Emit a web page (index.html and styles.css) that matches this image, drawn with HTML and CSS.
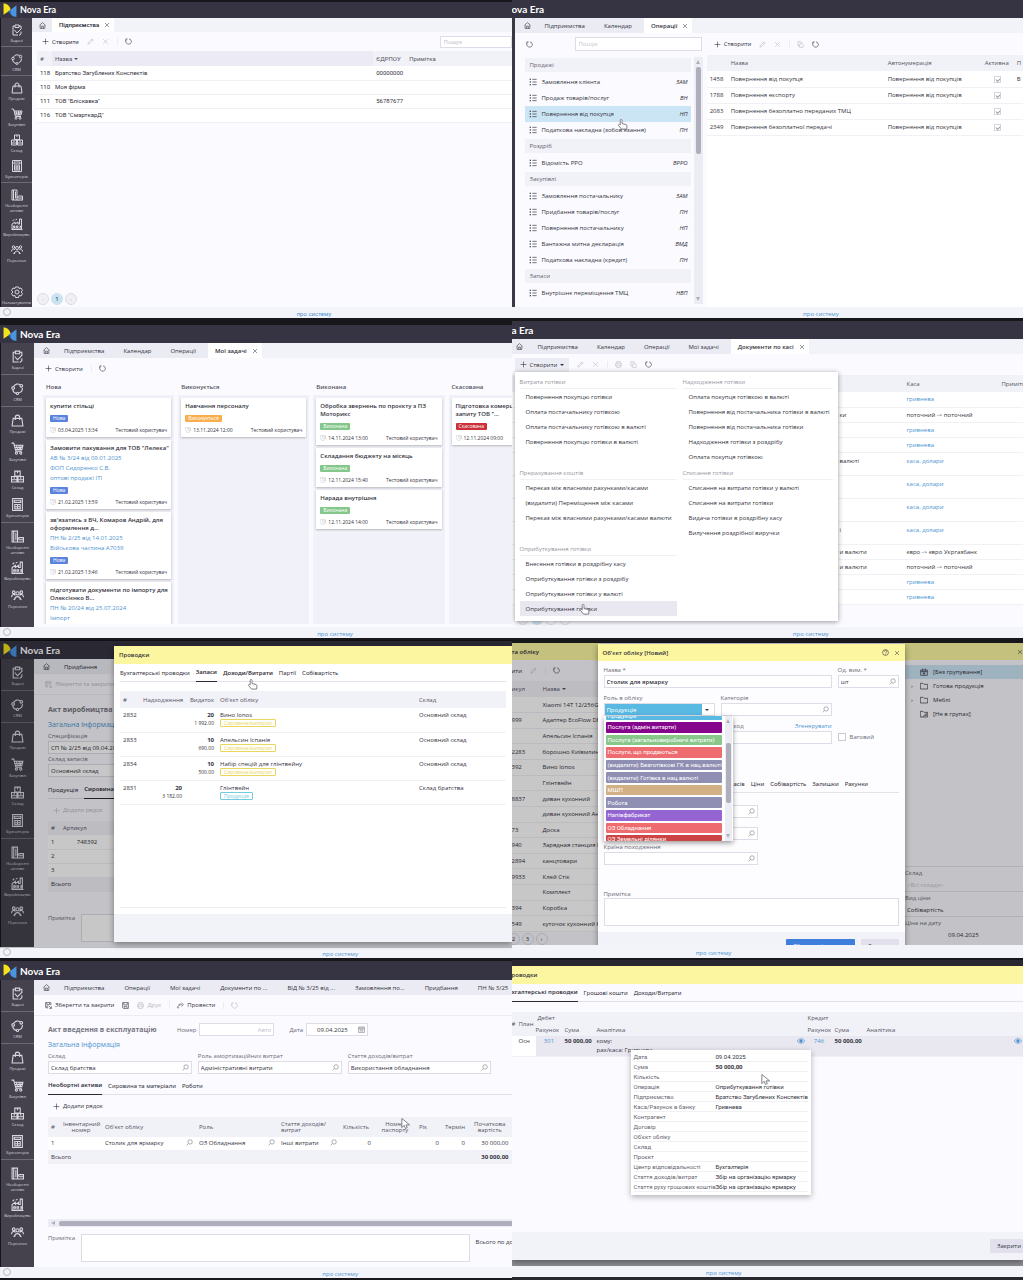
FILE: index.html
```html
<!DOCTYPE html>
<html lang="uk">
<head>
    <meta charset="UTF-8">
    <meta name="viewport" content="width=device-width, initial-scale=1.0">
    <title>Nova Era</title>
    <link rel="stylesheet" href="styles.css">
</head>
<body>
    <!-- icon set -->
    <svg class="sprite" aria-hidden="true">
        <symbol id="logo" viewBox="0 0 26 26">
            <path d="M1 1c7 0 12 5 13 12L1 22z" fill="#f3e21c"/>
            <path d="M25 4v22c-7 0-12-5-14-11z" fill="#4a94e0"/>
            <path d="M14 13l-3 2c1 3 2 5 4 7z" fill="#2d62b8"/>
        </symbol>
        <symbol id="task" viewBox="0 0 24 24"><path d="M8 4H4v18h10M16 4h4v5M8 2h8v5H8zM7 12l5 6 9-9M20 15v5l-4 3"/></symbol>
        <symbol id="crm" viewBox="0 0 24 24"><path d="M5 8a8.500 8.500 0 0 1 12-3M21 11a9 9 0 0 1-6 9M10 21a9 9 0 0 1-7-7"/><circle cx="19" cy="7" r="2.500"/><circle cx="4" cy="11" r="2.500"/><circle cx="12" cy="21" r="2"/></symbol>
        <symbol id="bag" viewBox="0 0 24 24"><path d="M4 8h16l2 14H2zM8 11V6a4 4 0 0 1 8 0v5"/></symbol>
        <symbol id="cart" viewBox="0 0 24 24"><path d="M1 2h4l4 15h11M6 6h16l-2 8H8M10 6l2 8M15 6v8M19 6l-2 8M7 10h14"/><circle cx="10" cy="20.500" r="2"/><circle cx="18" cy="20.500" r="2"/></symbol>
        <symbol id="boxes" viewBox="0 0 24 24"><path d="M7 2h10v9H7zM1 12h10v10H1zM13 12h10v10H13zM12 2v4M6 12v4M18 12v4M1 18h22"/></symbol>
        <symbol id="calc" viewBox="0 0 24 24"><path d="M3 1h18v22H3zM6 4h12v4H6zM7 11v9M12 11v9M17 11v9M6 12h12M6 16h12M6 20h12"/></symbol>
        <symbol id="assets" viewBox="0 0 24 24"><path d="M2 22V2h10v20zM5 2v20M9 5v14M12 22h11v-8h-8l-3 4M14 18h9M14 22v1M22 22v1"/></symbol>
        <symbol id="factory" viewBox="0 0 24 24"><path d="M2 22V12l6-4v4l6-4v4h3V2h4v20zM5 16h3v3H5zM11 16h3v3h-3zM17 16h2v3h-2M3 6l3-3M9 4l3-2M1 23h22"/></symbol>
        <symbol id="people" viewBox="0 0 24 24"><circle cx="5" cy="6" r="2.500"/><circle cx="19" cy="6" r="2.500"/><circle cx="12" cy="8" r="3"/><path d="M1 15c0-6 6-6 7-3M23 15c0-6-6-6-7-3M7 20c0-8 10-8 10 0M5 20l3-4M19 20l-3-4"/></symbol>
        <symbol id="gear" viewBox="0 0 24 24"><circle cx="12" cy="12" r="4"/><path d="M9 2h6l1 3 4-1 3 5-3 3 3 3-3 5-4-1-1 4H9l-1-4-4 1-3-5 3-3-3-3 3-5 4 1z"/></symbol>
        <symbol id="home" viewBox="0 0 24 24"><path d="M2 11L12 2l10 9M4 10v12h16V10M9 22v-8h6v8"/></symbol>
        <symbol id="refresh" viewBox="0 0 24 24"><path d="M9 3H3v6M3 6c-3 10 4 15 10 15 9 0 12-12 4-17M14 4h4"/></symbol>
        <symbol id="pencil" viewBox="0 0 24 24"><path d="M3 21l2-6L17 3l4 4L9 19zM15 5l4 4"/></symbol>
        <symbol id="close" viewBox="0 0 24 24"><path d="M4 4l16 16M20 4L4 20"/></symbol>
        <symbol id="plus" viewBox="0 0 24 24"><path d="M12 2v20M2 12h20"/></symbol>
        <symbol id="copy" viewBox="0 0 24 24"><path d="M3 2h10l3 4v3M3 2v15h5M9 9h8l4 4v9H9z"/></symbol>
        <symbol id="print" viewBox="0 0 24 24"><path d="M6 8V2h12v6M6 17H2V8h20v9h-4M6 14h12v8H6z"/></symbol>
        <symbol id="save" viewBox="0 0 24 24"><path d="M2 2h20v20H5l-3-3zM6 2v8h12V2M7 22v-7h10v7"/></symbol>
        <symbol id="save-close" viewBox="0 0 24 24"><path d="M11 20H4l-2-2V2h18v9M6 2v7h10V2M6 20v-6h5M13 13l9 9M22 15v7h-7"/></symbol>
        <symbol id="apply" viewBox="0 0 24 24"><path d="M2 20c1-8 6-11 14-11M15 3l7 6-7 6M2 20h5M6 10l5-5"/></symbol>
        <symbol id="find" viewBox="0 0 24 24"><circle cx="14" cy="10" r="7.500"/><path d="M8 16l-6 6"/></symbol>
        <symbol id="list" viewBox="0 0 24 24"><path d="M2 4h4M2 12h4M2 20h4M10 4h13M10 12h13M10 20h13M4 2v4M4 10v4M4 18v4"/></symbol>
        <symbol id="calendar" viewBox="0 0 24 24"><path d="M2 4h20v18H2zM2 9h20M7 1v5M17 1v5M6 13h12M6 17h12"/></symbol>
        <symbol id="clock" viewBox="0 0 24 24"><path d="M8 3h14v13M2 2h5M2 2v8M3 12a9 9 0 1 0 5-7M12 8v6h5"/></symbol>
        <symbol id="folder" viewBox="0 0 24 24"><path d="M1 21V4h8l3 3h11v14z"/></symbol>
        <symbol id="folder-off" viewBox="0 0 24 24"><path d="M1 21V4h8l3 3h11v14zM8 21L21 8M14 17h5v-5"/></symbol>
        <symbol id="package" viewBox="0 0 24 24"><path d="M2 6h20v16H2zM2 11h20M8 2v9M16 2v9M12 11v11M8 16h8"/></symbol>
        <symbol id="help" viewBox="0 0 24 24"><circle cx="12" cy="12" r="10"/><path d="M8 9c0-5 8-5 8 0 0 3-4 3-4 6M12 17v2"/></symbol>
        <symbol id="eye" viewBox="0 0 24 24"><path d="M1 12c5-9 17-9 22 0-5 9-17 9-22 0z"/><circle cx="12" cy="12" r="4" fill="currentColor"/></symbol>
        <symbol id="hand" viewBox="0 0 24 24"><path d="M7 13V3c0-3 4-3 4 0v7l9 2c2 1 2 3 1 10H10l-7-8c0-3 3-2 4-1z" fill="#fff"/></symbol>
        <symbol id="arrow" viewBox="0 0 24 24"><path d="M4 1v20l5-5 3 7 4-2-3-6h8z" fill="#fff"/></symbol>
    </svg>

    <main class="board">

        <!-- companies -->
        <section class="panel p-companies">
            <header class="topbar"><svg class="logo"><use href="#logo"/></svg><span class="brand">Nova Era</span></header>
            <div class="work">
                <nav class="sidebar">
                    <div class="side-group"><a href="#"><svg><use href="#task"/></svg>Задачі</a></div>
                    <div class="side-group"><a href="#"><svg><use href="#crm"/></svg>CRM</a></div>
                    <div class="side-group">
                        <a href="#"><svg><use href="#bag"/></svg>Продажі</a>
                        <a href="#"><svg><use href="#cart"/></svg>Закупівлі</a>
                        <a href="#"><svg><use href="#boxes"/></svg>Склад</a>
                        <a href="#"><svg><use href="#calc"/></svg>Бухгалтерія</a>
                    </div>
                    <div class="side-group">
                        <a href="#"><svg><use href="#assets"/></svg>Необоротні<br>активи</a>
                        <a href="#"><svg><use href="#factory"/></svg>Виробництво</a>
                        <a href="#"><svg><use href="#people"/></svg>Персонал</a>
                    </div>
                    <div class="side-bottom"><a href="#"><svg><use href="#gear"/></svg>Налаштування</a></div>
                </nav>
                <div class="content">
                    <nav class="tabs">
                        <button class="tab tab-home" aria-label="Головна"><svg><use href="#home"/></svg></button>
                        <button class="tab active">Підприємства <svg><use href="#close"/></svg></button>
                    </nav>
                    <div class="toolbar">
                        <button class="tool"><svg><use href="#plus"/></svg>Створити</button>
                        <button class="tool off" aria-label="Редагувати"><svg><use href="#pencil"/></svg></button>
                        <button class="tool off" aria-label="Видалити"><svg><use href="#close"/></svg></button>
                        <button class="tool sep" aria-label="Оновити"><svg><use href="#refresh"/></svg></button>
                        <input class="search" type="text" placeholder="Пошук" aria-label="Пошук">
                    </div>
                    <table class="grid companies">
                        <thead><tr><th class="c-id">#</th><th class="c-name sorted">Назва <span class="caret"></span></th><th class="c-code">ЄДРПОУ</th><th>Примітка</th></tr></thead>
                        <tbody>
                            <tr><td>118</td><td>Братство Загублених Конспектів</td><td>00000000</td><td></td></tr>
                            <tr><td>110</td><td>Моя фірма</td><td></td><td></td></tr>
                            <tr><td>111</td><td>ТОВ "Бліскавка"</td><td>56787677</td><td></td></tr>
                            <tr><td>116</td><td>ТОВ "СмарткарД"</td><td></td><td></td></tr>
                        </tbody>
                    </table>
                    <div class="pager">
                        <button class="off" aria-label="Назад">‹</button><button class="current">1</button><button class="off" aria-label="Далі">›</button>
                    </div>
                </div>
            </div>
            <footer class="statusbar"><span class="ring"></span><a href="#">про систему</a></footer>
        </section>

        <!-- operations -->
        <section class="panel p-operations">
            <header class="topbar"><span class="brand">ova Era</span></header>
            <div class="work edge">
                <div class="content">
                    <nav class="tabs">
                        <button class="tab tab-home" aria-label="Головна"><svg><use href="#home"/></svg></button>
                        <button class="tab">Підприємства</button>
                        <button class="tab">Календар</button>
                        <button class="tab active">Операції <svg><use href="#close"/></svg></button>
                    </nav>
                    <div class="split">
                        <div class="pane-left">
                            <div class="toolbar">
                                <button class="tool" aria-label="Оновити"><svg><use href="#refresh"/></svg></button>
                                <input class="search" type="text" placeholder="Пошук" aria-label="Пошук">
                            </div>
                            <div class="op-wrap">
                                <div class="op-list">
                                    <h3>Продажі</h3>
                                    <a href="#"><svg><use href="#list"/></svg>Замовлення клієнта<i>ЗАМ</i></a>
                                    <a href="#"><svg><use href="#list"/></svg>Продаж товарів/послуг<i>ВН</i></a>
                                    <a href="#" class="selected"><svg><use href="#list"/></svg>Повернення від покупця<i>НП</i></a>
                                    <a href="#"><svg><use href="#list"/></svg>Податкова накладна (зобов'язання)<i>ПН</i></a>
                                    <h3>Роздріб</h3>
                                    <a href="#"><svg><use href="#list"/></svg>Відомість РРО<i>ВРРО</i></a>
                                    <h3>Закупівлі</h3>
                                    <a href="#"><svg><use href="#list"/></svg>Замовлення постачальнику<i>ЗАМ</i></a>
                                    <a href="#"><svg><use href="#list"/></svg>Придбання товарів/послуг<i>ПН</i></a>
                                    <a href="#"><svg><use href="#list"/></svg>Повернення постачальнику<i>НП</i></a>
                                    <a href="#"><svg><use href="#list"/></svg>Вантажна митна декларація<i>ВМД</i></a>
                                    <a href="#"><svg><use href="#list"/></svg>Податкова накладна (кредит)<i>ПН</i></a>
                                    <h3>Запаси</h3>
                                    <a href="#"><svg><use href="#list"/></svg>Внутрішнє переміщення ТМЦ<i>НВП</i></a>
                                    <a href="#" aria-label="Інше"><svg><use href="#list"/></svg></a>
                                </div>
                                <div class="vscroll"><span class="up"></span><span class="thumb"></span><span class="down"></span></div>
                            </div>
                        </div>
                        <div class="pane-right">
                            <div class="toolbar">
                                <button class="tool"><svg><use href="#plus"/></svg>Створити</button>
                                <button class="tool off" aria-label="Редагувати"><svg><use href="#pencil"/></svg></button>
                                <button class="tool off" aria-label="Видалити"><svg><use href="#close"/></svg></button>
                                <button class="tool off sep" aria-label="Копіювати"><svg><use href="#copy"/></svg></button>
                                <button class="tool" aria-label="Оновити"><svg><use href="#refresh"/></svg></button>
                            </div>
                            <table class="grid operations">
                                <thead><tr><th class="c-id"></th><th class="c-name">Назва</th><th class="c-auto">Автонумерація</th><th class="c-on">Активна</th><th>П</th></tr></thead>
                                <tbody>
                                    <tr><td>1458</td><td>Повернення від покупця</td><td>Повернення від покупців</td><td class="mid"><input type="checkbox" checked disabled aria-label="Активна"></td><td>В</td></tr>
                                    <tr><td>1788</td><td>Повернення експорту</td><td>Повернення від покупців</td><td class="mid"><input type="checkbox" checked disabled aria-label="Активна"></td><td></td></tr>
                                    <tr><td>2083</td><td>Повернення безоплатно переданих ТМЦ</td><td></td><td class="mid"><input type="checkbox" checked disabled aria-label="Активна"></td><td></td></tr>
                                    <tr><td>2349</td><td>Повернення безоплатної передачі</td><td>Повернення від покупців</td><td class="mid"><input type="checkbox" checked disabled aria-label="Активна"></td><td></td></tr>
                                </tbody>
                            </table>
                        </div>
                    </div>
                </div>
            </div>
            <footer class="statusbar"><a href="#">про систему</a></footer>
            <svg class="cursor"><use href="#hand"/></svg>
        </section>

        <!-- my tasks -->
        <section class="panel p-tasks">
            <header class="topbar"><svg class="logo"><use href="#logo"/></svg><span class="brand">Nova Era</span></header>
            <div class="work">
                <nav class="sidebar">
                    <div class="side-group"><a href="#"><svg><use href="#task"/></svg>Задачі</a></div>
                    <div class="side-group"><a href="#"><svg><use href="#crm"/></svg>CRM</a></div>
                    <div class="side-group">
                        <a href="#"><svg><use href="#bag"/></svg>Продажі</a>
                        <a href="#"><svg><use href="#cart"/></svg>Закупівлі</a>
                        <a href="#"><svg><use href="#boxes"/></svg>Склад</a>
                        <a href="#"><svg><use href="#calc"/></svg>Бухгалтерія</a>
                    </div>
                    <div class="side-group">
                        <a href="#"><svg><use href="#assets"/></svg>Необоротні<br>активи</a>
                        <a href="#"><svg><use href="#factory"/></svg>Виробництво</a>
                        <a href="#"><svg><use href="#people"/></svg>Персонал</a>
                    </div>
                </nav>
                <div class="content">
                    <nav class="tabs">
                        <button class="tab tab-home" aria-label="Головна"><svg><use href="#home"/></svg></button>
                        <button class="tab">Підприємства</button>
                        <button class="tab">Календар</button>
                        <button class="tab">Операції</button>
                        <button class="tab active">Мої задачі <svg><use href="#close"/></svg></button>
                    </nav>
                    <div class="toolbar">
                        <button class="tool"><svg><use href="#plus"/></svg>Створити</button>
                        <button class="tool sep" aria-label="Оновити"><svg><use href="#refresh"/></svg></button>
                    </div>
                    <div class="kanban">
                        <div class="lane">
                            <h3>Нова</h3>
                            <div class="lane-body">
                                <article class="card">
                                    <h4>купити стільці</h4>
                                    <span class="badge blue">Нова</span>
                                    <div class="meta"><svg><use href="#clock"/></svg><time>03.04.2025 13:34</time><span>Тестовий користувач</span></div>
                                </article>
                                <article class="card">
                                    <h4>Замовити пакування для ТОВ "Лелека"</h4>
                                    <a href="#">АВ № 3/24 від 09.01.2025</a>
                                    <a href="#">ФОП Сидоренко С.В.</a>
                                    <a href="#">оптові продажі ІТІ</a>
                                    <span class="badge blue">Нова</span>
                                    <div class="meta"><svg><use href="#clock"/></svg><time>21.02.2025 13:59</time><span>Тестовий користувач</span></div>
                                </article>
                                <article class="card">
                                    <h4>зв'язатись з ВЧ, Комаров Андрій, для оформлення д...</h4>
                                    <a href="#">ПН № 2/25 від 14.01.2025</a>
                                    <a href="#">Військова частина А7039</a>
                                    <span class="badge blue">Нова</span>
                                    <div class="meta"><svg><use href="#clock"/></svg><time>21.02.2025 13:46</time><span>Тестовий користувач</span></div>
                                </article>
                                <article class="card">
                                    <h4>підготувати документи по імпорту для Олексієнко В...</h4>
                                    <a href="#">ПН № 20/24 від 25.07.2024</a>
                                    <a href="#">Імпорт</a>
                                </article>
                            </div>
                        </div>
                        <div class="lane">
                            <h3>Виконується</h3>
                            <div class="lane-body">
                                <article class="card">
                                    <h4>Навчання персоналу</h4>
                                    <span class="badge orange">Виконується</span>
                                    <div class="meta"><svg><use href="#clock"/></svg><time>13.11.2024 12:00</time><span>Тестовий користувач</span></div>
                                </article>
                            </div>
                        </div>
                        <div class="lane">
                            <h3>Виконана</h3>
                            <div class="lane-body">
                                <article class="card">
                                    <h4>Обробка звернень по проєкту з ПЗ Моторикс</h4>
                                    <span class="badge green">Виконана</span>
                                    <div class="meta"><svg><use href="#clock"/></svg><time>14.11.2024 13:00</time><span>Тестовий користувач</span></div>
                                </article>
                                <article class="card">
                                    <h4>Складання бюджету на місяць</h4>
                                    <span class="badge green">Виконана</span>
                                    <div class="meta"><svg><use href="#clock"/></svg><time>12.11.2024 15:40</time><span>Тестовий користувач</span></div>
                                </article>
                                <article class="card">
                                    <h4>Нарада внутрішня</h4>
                                    <span class="badge green">Виконана</span>
                                    <div class="meta"><svg><use href="#clock"/></svg><time>12.11.2024 14:00</time><span>Тестовий користувач</span></div>
                                </article>
                            </div>
                        </div>
                        <div class="lane">
                            <h3>Скасована</h3>
                            <div class="lane-body">
                                <article class="card">
                                    <h4>Підготовка комерційного<br>запиту ТОВ "...</h4>
                                    <span class="badge red">Скасована</span>
                                    <div class="meta"><svg><use href="#clock"/></svg><time>12.11.2024 09:00</time></div>
                                </article>
                            </div>
                        </div>
                    </div>
                </div>
            </div>
            <footer class="statusbar"><span class="ring"></span><a href="#">про систему</a></footer>
        </section>

        <!-- cash documents -->
        <section class="panel p-cash">
            <header class="topbar"><span class="brand">a Era</span></header>
            <div class="work">
                <div class="content">
                    <nav class="tabs">
                        <button class="tab tab-home" aria-label="Головна"><svg><use href="#home"/></svg></button>
                        <button class="tab">Підприємства</button>
                        <button class="tab">Календар</button>
                        <button class="tab">Операції</button>
                        <button class="tab">Мої задачі</button>
                        <button class="tab active">Документи по касі <svg><use href="#close"/></svg></button>
                    </nav>
                    <div class="toolbar">
                        <button class="tool open"><svg><use href="#plus"/></svg>Створити <span class="caret"></span></button>
                        <button class="tool off" aria-label="Редагувати"><svg><use href="#pencil"/></svg></button>
                        <button class="tool off" aria-label="Видалити"><svg><use href="#close"/></svg></button>
                        <button class="tool off sep" aria-label="Друк"><svg><use href="#print"/></svg></button>
                        <button class="tool off" aria-label="Копіювати"><svg><use href="#copy"/></svg></button>
                        <button class="tool" aria-label="Оновити"><svg><use href="#refresh"/></svg></button>
                    </div>
                    <table class="grid cash">
                        <thead><tr><th class="c-op"></th><th class="c-cash">Каса</th><th>Примітка</th></tr></thead>
                        <tbody>
                            <tr><td></td><td><a href="#">гривнева</a></td><td></td></tr>
                            <tr><td>ки</td><td>поточний -&gt; поточний</td><td></td></tr>
                            <tr><td></td><td><a href="#">гривнева</a></td><td></td></tr>
                            <tr><td></td><td><a href="#">гривнева</a></td><td></td></tr>
                            <tr class="tall"><td>валюті</td><td><a href="#">каса, долари</a></td><td></td></tr>
                            <tr class="tall"><td></td><td><a href="#">каса, долари</a></td><td></td></tr>
                            <tr class="tall"><td></td><td><a href="#">каса, долари</a></td><td></td></tr>
                            <tr class="tall"><td>і</td><td><a href="#">каса, долари</a></td><td></td></tr>
                            <tr><td>и валюти</td><td>євро -&gt; євро Укргазбанк</td><td></td></tr>
                            <tr><td>и валюти</td><td>поточний -&gt; поточний</td><td></td></tr>
                            <tr><td></td><td><a href="#">гривнева</a></td><td></td></tr>
                            <tr><td></td><td><a href="#">гривнева</a></td><td></td></tr>
                        </tbody>
                    </table>
                    <div class="pager"><button class="off" aria-label="Назад"></button><button class="current" aria-label="1"></button><button aria-label="2"></button><button aria-label="Далі"></button></div>
                </div>
            </div>
            <footer class="statusbar"><a href="#">про систему</a></footer>
            <div class="create-menu">
                <div class="menu-group">
                    <h3>Витрата готівки</h3>
                    <button>Повернення покупцю готівки</button>
                    <button>Оплата постачальнику готівкою</button>
                    <button>Оплата постачальнику готівкою в валюті</button>
                    <button>Повернення покупцю готівки в валюті</button>
                </div>
                <div class="menu-group">
                    <h3>Надходження готівки</h3>
                    <button>Оплата покупця готівкою в валюті</button>
                    <button>Повернення від постачальника готівки в валюті</button>
                    <button>Повернення від постачальника готівки</button>
                    <button>Надходження готівки з роздрібу</button>
                    <button>Оплата покупця готівкою</button>
                </div>
                <div class="menu-group">
                    <h3>Прерахування коштів</h3>
                    <button>Переказ між власними рахунками/касами</button>
                    <button>(видалити) Переміщення між касами</button>
                    <button>Переказ між власними рахунками/касами валюти</button>
                </div>
                <div class="menu-group">
                    <h3>Списання готівки</h3>
                    <button>Списання на витрати готівки у валюті</button>
                    <button>Списання на витрати готівки</button>
                    <button>Видача готівки в роздрібну касу</button>
                    <button>Вилучення роздрібної виручки</button>
                </div>
                <div class="menu-group">
                    <h3>Оприбуткування готівки</h3>
                    <button>Внесення готівки в роздрібну касу</button>
                    <button>Оприбуткування готівки з роздрібу</button>
                    <button>Оприбуткування готівки у валюті</button>
                    <button class="hover">Оприбуткування готівки</button>
                </div>
            </div>
            <svg class="cursor"><use href="#hand"/></svg>
        </section>

        <!-- production postings -->
        <section class="panel p-postings">
            <header class="topbar"><svg class="logo"><use href="#logo"/></svg><span class="brand">Nova Era</span></header>
            <div class="work">
                <nav class="sidebar">
                    <div class="side-group"><a href="#"><svg><use href="#task"/></svg>Задачі</a></div>
                    <div class="side-group"><a href="#"><svg><use href="#crm"/></svg>CRM</a></div>
                    <div class="side-group">
                        <a href="#"><svg><use href="#bag"/></svg>Продажі</a>
                        <a href="#"><svg><use href="#cart"/></svg>Закупівлі</a>
                        <a href="#"><svg><use href="#boxes"/></svg>Склад</a>
                        <a href="#"><svg><use href="#calc"/></svg>Бухгалтерія</a>
                    </div>
                    <div class="side-group">
                        <a href="#"><svg><use href="#assets"/></svg>Необоротні<br>активи</a>
                        <a href="#"><svg><use href="#factory"/></svg>Виробництво</a>
                        <a href="#"><svg><use href="#people"/></svg>Персонал</a>
                    </div>
                </nav>
                <div class="content">
                    <nav class="tabs">
                        <button class="tab tab-home" aria-label="Головна"><svg><use href="#home"/></svg></button>
                        <button class="tab">Придбання</button>
                    </nav>
                    <div class="toolbar line">
                        <button class="tool off"><svg><use href="#save-close"/></svg>Зберегти та закрити</button>
                    </div>
                    <div class="form">
                        <h2>Акт виробництва</h2>
                        <h3 class="section-title">Загальна інформація</h3>
                        <label for="spec">Специфікація</label>
                        <div class="field"><input id="spec" type="text" value="СП № 2/25 від 09.04.2025"></div>
                        <label for="stock">Склад запасів</label>
                        <div class="field"><input id="stock" type="text" value="Основний склад"></div>
                        <div class="subtabs"><button>Продукція</button><button class="active">Сировина</button></div>
                        <button class="tool off add-row"><svg><use href="#plus"/></svg>Додати рядок</button>
                        <table class="grid materials">
                            <thead><tr><th class="c-id">#</th><th class="c-art">Артикул</th><th></th></tr></thead>
                            <tbody>
                                <tr><td>1</td><td class="mid">748392</td><td></td></tr>
                                <tr><td>2</td><td></td><td></td></tr>
                                <tr><td>3</td><td></td><td></td></tr>
                            </tbody>
                            <tfoot><tr><td colspan="3">Всього</td></tr></tfoot>
                        </table>
                        <div class="note"><label for="note1">Примітка</label><textarea id="note1"></textarea></div>
                    </div>
                </div>
            </div>
            <footer class="statusbar"><span class="ring"></span><a href="#">про систему</a></footer>
            <div class="overlay"></div>
            <div class="modal">
                <div class="modal-head">Проводки</div>
                <div class="modal-body">
                    <div class="subtabs"><button>Бухгалтерські проводки</button><button class="active">Запаси</button><button class="hover">Доходи/Витрати</button><button>Партії</button><button>Собівартість</button></div>
                    <div class="table-box">
                        <table class="grid postings">
                            <thead><tr><th class="c-id">#</th><th class="c-in">Надходження</th><th class="c-out">Видаток</th><th class="c-item">Об'єкт обліку</th><th>Склад</th></tr></thead>
                            <tbody>
                                <tr><td>2832</td><td></td><td><b>20</b><br><small>1 992.00</small></td><td>Вино Ionos<br><span class="chip yellow">Сировина/матеріал</span></td><td>Основний склад</td></tr>
                                <tr><td>2833</td><td></td><td><b>10</b><br><small>690.00</small></td><td>Апельсин Іспанія<br><span class="chip yellow">Сировина/матеріал</span></td><td>Основний склад</td></tr>
                                <tr><td>2834</td><td></td><td><b>10</b><br><small>500.00</small></td><td>Набір спецій для глінтвейну<br><span class="chip yellow">Сировина/матеріал</span></td><td>Основний склад</td></tr>
                                <tr><td>2831</td><td><b>20</b><br><small>3 182.00</small></td><td></td><td>Глінтвейн<br><span class="chip cyan">Продукція</span></td><td>Склад братства</td></tr>
                            </tbody>
                        </table>
                    </div>
                </div>
                <div class="modal-foot"></div>
            </div>
            <svg class="cursor"><use href="#hand"/></svg>
        </section>

        <!-- new item -->
        <section class="panel p-item">
            <div class="work">
                <div class="behind-left">
                    <div class="modal-head">та обліку</div>
                    <div class="toolbar">
                        <button class="tool">ити</button>
                        <button class="tool off" aria-label="Редагувати"><svg><use href="#pencil"/></svg></button>
                        <button class="tool sep" aria-label="Оновити"><svg><use href="#refresh"/></svg></button>
                    </div>
                    <table class="grid stock">
                        <thead><tr><th class="c-art">икул</th><th>Назва <span class="caret"></span></th></tr></thead>
                        <tbody>
                            <tr><td></td><td>Xiaomi 14T 12/256GB</td></tr>
                            <tr><td>999</td><td>Адаптер EcoFlow DELTA</td></tr>
                            <tr><td></td><td>Апельсин Іспанія</td></tr>
                            <tr><td>2283</td><td>борошно Київмлин</td></tr>
                            <tr><td>392</td><td>Вино Ionos</td></tr>
                            <tr><td></td><td>Глінтвейн</td></tr>
                            <tr><td>8837</td><td>диван кухонний</td></tr>
                            <tr><td></td><td>диван кухонний Анна</td></tr>
                            <tr><td>73</td><td>Доска</td></tr>
                            <tr><td>940</td><td>Зарядная станция Eco</td></tr>
                            <tr><td>2894</td><td>канцтовари</td></tr>
                            <tr><td>9933</td><td>Клей Стік</td></tr>
                            <tr><td></td><td>Комплект</td></tr>
                            <tr><td>394</td><td>Коробка</td></tr>
                            <tr><td>549</td><td>куточок кухонний Кут</td></tr>
                        </tbody>
                    </table>
                    <div class="pager"><button>2</button><button>3</button><button aria-label="Далі">›</button></div>
                </div>
                <div class="behind-right">
                    <div class="modal-head"><svg><use href="#close"/></svg></div>
                    <ul class="tree">
                        <li class="selected"><span class="twist"></span><svg><use href="#package"/></svg>[Без групування]</li>
                        <li><span class="twist">›</span><svg><use href="#folder"/></svg>Готова продукція</li>
                        <li><span class="twist">›</span><svg><use href="#folder"/></svg>Меблі</li>
                        <li><span class="twist"></span><svg><use href="#folder-off"/></svg>[Не в групах]</li>
                    </ul>
                    <div class="filters">
                        <label for="f-stock">Склад</label>
                        <input id="f-stock" type="text" placeholder="&lt;Всі склади&gt;">
                        <label for="f-price">Вид ціни</label>
                        <input id="f-price" type="text" value="Собівартість">
                        <label for="f-date">Ціна на дату</label>
                        <input id="f-date" class="date" type="text" value="09.04.2025">
                    </div>
                </div>
                <div class="overlay"></div>
                <div class="modal">
                    <div class="modal-head">Об'єкт обліку [Новий]<svg class="push"><use href="#help"/></svg><svg><use href="#close"/></svg></div>
                    <div class="modal-body">
                        <div class="form-row first">
                            <div class="cell wide"><label for="i-name">Назва *</label><div class="field"><input id="i-name" class="strong" type="text" value="Столик для ярмарку"></div></div>
                            <div class="cell unit"><label for="i-unit">Од. вим. *</label><div class="field"><input id="i-unit" type="text" value="шт"><svg><use href="#find"/></svg></div></div>
                        </div>
                        <div class="form-row">
                            <div class="cell half"><label for="i-role">Роль в обліку</label>
                                <div class="field role"><select id="i-role"><option>Продукція</option></select><span class="caret"></span></div>
                                <div class="role-menu">
                                    <div class="role-list">
                                        <span class="r-sky cut-top">Продукція</span>
                                        <span class="r-purple">Послуга (адмін.витарти)</span>
                                        <span class="r-green">Послуга (загальновиробничі витрати)</span>
                                        <span class="r-coral">Послуги, що продаються</span>
                                        <span class="r-slate">(видалити) Безготівкові ГК в нац.валюті</span>
                                        <span class="r-slate">(видалити) Готівка в нац.валюті</span>
                                        <span class="r-tan">МШП</span>
                                        <span class="r-slate">Робота</span>
                                        <span class="r-violet">Напівфабрикат</span>
                                        <span class="r-coral">ОЗ Обладнання</span>
                                        <span class="r-red cut">ОЗ Земельні ділянки</span>
                                    </div>
                                    <div class="vscroll"><span class="up"></span><span class="thumb"></span><span class="down"></span></div>
                                </div>
                            </div>
                            <div class="cell half"><label for="i-cat">Категорія</label><div class="field"><input id="i-cat" type="text"><svg><use href="#find"/></svg></div></div>
                            <div class="cell unit"></div>
                        </div>
                        <div class="form-row">
                            <div class="cell half"></div>
                            <div class="cell half"><label for="i-code" class="code-label"><span>код</span><a href="#">Згенерувати</a></label><div class="field"><input id="i-code" type="text"></div></div>
                            <div class="cell unit"><label class="check"><input type="checkbox"> Ваговий</label></div>
                        </div>
                        <div class="subtabs"><button>асів</button><button>Ціни</button><button>Собівартість</button><button>Залишки</button><button>Рахунки</button></div>
                        <div class="stack">
                            <div class="field bare"><input type="text" aria-label="Виробник"><svg><use href="#find"/></svg></div>
                            <div class="field bare"><input type="text" aria-label="Бренд"><svg><use href="#find"/></svg></div>
                            <label for="i-c">Країна походження</label><div class="field"><input id="i-c" type="text"><svg><use href="#find"/></svg></div>
                        </div>
                        <label for="i-note">Примітка</label>
                        <textarea id="i-note"></textarea>
                    </div>
                    <div class="modal-foot"><button class="primary">Зберегти і закрити</button><button class="plain">Закрити</button></div>
                </div>
                <svg class="cursor"><use href="#arrow"/></svg>
            </div>
            <footer class="statusbar"><a href="#">про систему</a></footer>
        </section>

        <!-- commissioning act -->
        <section class="panel p-act">
            <header class="topbar"><svg class="logo"><use href="#logo"/></svg><span class="brand">Nova Era</span></header>
            <div class="work">
                <nav class="sidebar">
                    <div class="side-group"><a href="#"><svg><use href="#task"/></svg>Задачі</a></div>
                    <div class="side-group"><a href="#"><svg><use href="#crm"/></svg>CRM</a></div>
                    <div class="side-group">
                        <a href="#"><svg><use href="#bag"/></svg>Продажі</a>
                        <a href="#"><svg><use href="#cart"/></svg>Закупівлі</a>
                        <a href="#"><svg><use href="#boxes"/></svg>Склад</a>
                        <a href="#"><svg><use href="#calc"/></svg>Бухгалтерія</a>
                    </div>
                    <div class="side-group">
                        <a href="#"><svg><use href="#assets"/></svg>Необоротні<br>активи</a>
                        <a href="#"><svg><use href="#factory"/></svg>Виробництво</a>
                        <a href="#"><svg><use href="#people"/></svg>Персонал</a>
                    </div>
                </nav>
                <div class="content">
                    <nav class="tabs">
                        <button class="tab tab-home" aria-label="Головна"><svg><use href="#home"/></svg></button>
                        <button class="tab">Підприємства</button>
                        <button class="tab">Операції</button>
                        <button class="tab">Мої задачі</button>
                        <button class="tab">Документи по ...</button>
                        <button class="tab">ВІД № 3/25 від ...</button>
                        <button class="tab">Замовлення по...</button>
                        <button class="tab">Придбання</button>
                        <button class="tab">ПН № 3/25</button>
                    </nav>
                    <div class="toolbar line">
                        <button class="tool"><svg><use href="#save-close"/></svg>Зберегти та закрити</button>
                        <button class="tool" aria-label="Зберегти"><svg><use href="#save"/></svg></button>
                        <button class="tool off"><svg><use href="#print"/></svg>Друк</button>
                        <button class="tool sep"><svg><use href="#apply"/></svg>Провести</button>
                        <button class="tool off sep" aria-label="Оновити"><svg><use href="#refresh"/></svg></button>
                    </div>
                    <div class="form">
                        <div class="title-row">
                            <h2>Акт введення в експлуатацію</h2>
                            <label for="a-num">Номер</label><div class="field num"><input id="a-num" type="text" placeholder="Авто"></div>
                            <label for="a-date">Дата</label><div class="field day"><input id="a-date" type="text" value="09.04.2025"><svg><use href="#calendar"/></svg></div>
                        </div>
                        <h3 class="section-title">Загальна інформація</h3>
                        <div class="form-row">
                            <div class="cell"><label for="a-stock">Склад</label><div class="field"><input id="a-stock" type="text" value="Склад братства"><svg><use href="#find"/></svg></div></div>
                            <div class="cell"><label for="a-role">Роль амортизаційних витрат</label><div class="field"><input id="a-role" type="text" value="Адміністративні витрати"><svg><use href="#find"/></svg></div></div>
                            <div class="cell"><label for="a-cost">Стаття доходів/витрат</label><div class="field"><input id="a-cost" type="text" value="Використання обладнання"><svg><use href="#find"/></svg></div></div>
                        </div>
                        <div class="subtabs"><button class="active">Необортні активи</button><button>Сировина та матеріали</button><button>Роботи</button></div>
                        <button class="tool add-row"><svg><use href="#plus"/></svg>Додати рядок</button>
                        <table class="grid assets">
                            <thead><tr><th class="c-id">#</th><th class="c-inv mid">Інвентарний номер</th><th class="c-item">Об'єкт обліку</th><th class="c-role">Роль</th><th class="c-cost">Стаття доходів/ витрат</th><th class="c-qty">Кількість</th><th class="c-pass mid">Номер паспорту</th><th class="c-year">Рік</th><th class="c-term">Термін</th><th class="mid">Початкова вартість</th></tr></thead>
                            <tbody>
                                <tr><td>1</td><td></td><td>Столик для ярмарку <svg><use href="#find"/></svg></td><td>ОЗ Обладнання <svg><use href="#find"/></svg></td><td>Інші витрати <svg><use href="#find"/></svg></td><td class="num">0</td><td></td><td class="num">0</td><td class="num">0</td><td class="num">30 000,00</td></tr>
                            </tbody>
                            <tfoot><tr><td colspan="5">Всього</td><td></td><td></td><td></td><td></td><td class="num"><b>30 000,00</b></td></tr></tfoot>
                        </table>
                        <div class="hscroll"><span class="left"></span><span class="thumb"></span></div>
                        <div class="note"><label for="note2">Примітка</label><textarea id="note2"></textarea><span class="total">Всього по документу</span></div>
                    </div>
                </div>
            </div>
            <footer class="statusbar"><span class="ring"></span><a href="#">про систему</a></footer>
            <svg class="cursor"><use href="#arrow"/></svg>
        </section>

        <!-- ledger postings -->
        <section class="panel p-ledger">
            <div class="work">
                <div class="modal">
                    <div class="modal-head">роводки</div>
                    <div class="modal-body">
                        <div class="subtabs"><button class="active">хгалтерські проводки</button><button>Грошові кошти</button><button>Доходи/Витрати</button></div>
                        <table class="grid ledger">
                            <colgroup>
                                <col class="c-id"><col class="c-plan">
                                <col class="c-acc"><col class="c-sum"><col class="c-an"><col class="c-eye">
                                <col class="c-acc"><col class="c-sum"><col><col class="c-eye">
                            </colgroup>
                            <thead>
                                <tr><th rowspan="2">#</th><th rowspan="2">План</th><th colspan="4">Дебет</th><th colspan="4">Кредит</th></tr>
                                <tr><th>Рахунок</th><th>Сума</th><th>Аналітика</th><th></th><th>Рахунок</th><th>Сума</th><th>Аналітика</th><th></th></tr>
                            </thead>
                            <tbody>
                                <tr><td></td><td>Осн</td><td class="mid"><a href="#">301</a></td><td><b>50 000,00</b></td><td>кому:<br>рах/каса: Гривнева</td><td class="look"><svg><use href="#eye"/></svg></td><td class="mid"><a href="#">746</a></td><td><b>50 000,00</b></td><td></td><td class="look"><svg><use href="#eye"/></svg></td></tr>
                            </tbody>
                        </table>
                    </div>
                    <div class="modal-foot"><button class="plain">Закрити</button></div>
                </div>
                <dl class="popover">
                    <dt>Дата</dt><dd>09.04.2025</dd>
                    <dt>Сума</dt><dd><b>50 000,00</b></dd>
                    <dt>Кількість</dt><dd></dd>
                    <dt>Операція</dt><dd>Оприбуткування готівки</dd>
                    <dt>Підприємство</dt><dd>Братство Загублених Конспектів</dd>
                    <dt>Каса/Рахунок в банку</dt><dd>Гривнева</dd>
                    <dt>Контрагент</dt><dd></dd>
                    <dt>Договір</dt><dd></dd>
                    <dt>Об'єкт обліку</dt><dd></dd>
                    <dt>Склад</dt><dd></dd>
                    <dt>Проєкт</dt><dd></dd>
                    <dt>Центр відповідальності</dt><dd>Бухгалтерія</dd>
                    <dt>Стаття доходів/витрат</dt><dd>Збір на організацію ярмарку</dd>
                    <dt>Стаття руху грошових коштів</dt><dd>Збір на організацію ярмарку</dd>
                </dl>
                <svg class="cursor"><use href="#arrow"/></svg>
            </div>
            <footer class="statusbar"><a href="#">про систему</a></footer>
        </section>
    </main>
</body>
</html>
```
FILE: styles.css
```css
* {
    margin: 0;
    padding: 0;
    box-sizing: border-box;
}

body {
    font-family: 'Open Sans', 'Noto Sans', sans-serif;
    font-size: 6px;
    line-height: 8px;
    font-variant-ligatures: none;
    color: #33323c;
    background: #17161b;
}

button,
input,
select,
textarea {
    font: inherit;
    color: inherit;
    border: 0;
    background: none;
}

button {
    white-space: nowrap;
}

input,
select {
    width: 100%;
    min-width: 0;
}

textarea {
    display: block;
    resize: none;
    background: #fff;
    border: 1px solid #dddde8;
}

a {
    color: #4c93cf;
    text-decoration: none;
}

h2,
h3,
h4 {
    font-size: inherit;
    font-weight: 600;
}

svg {
    fill: none;
    stroke: currentColor;
    stroke-width: 2;
    width: 8px;
    height: 8px;
    flex-shrink: 0;
}

.sprite {
    position: absolute;
    width: 0;
    height: 0;
}

/* board */

.board {
    display: grid;
    grid-template-columns: minmax(0, 1fr) minmax(0, 1fr);
}

.panel {
    position: relative;
    display: flex;
    flex-direction: column;
    height: 25vh;
    min-height: 300px;
    overflow: hidden;
    padding-bottom: 2px;
    background: #17161b;
}

.topbar {
    display: flex;
    align-items: center;
    gap: 3px;
    flex: 0 0 18px;
    padding-left: 3px;
    background: #363442;
    color: #fff;
}

.logo {
    width: 14px;
    height: 14px;
    stroke: none;
}

.brand {
    font-family: Lato, sans-serif;
    font-size: 10px;
    font-weight: 700;
    line-height: 14px;
}

.work {
    position: relative;
    display: flex;
    flex: 1;
    min-height: 0;
    overflow: hidden;
    background: #fafaff;
}

.content {
    display: flex;
    flex-direction: column;
    flex: 1;
    min-width: 0;
}

.statusbar {
    position: relative;
    display: flex;
    align-items: center;
    flex: 0 0 10px;
    padding-top: 3px;
    background: #f3f3fa;
}

.ring {
    position: absolute;
    left: 3px;
    top: 1px;
    width: 8px;
    height: 8px;
    border: 1px solid #b9b9c4;
    border-radius: 50%;
}

.overlay {
    position: absolute;
    inset: 0;
    background: rgba(0, 0, 0, 0.22);
}

.cursor {
    position: absolute;
    width: 11px;
    height: 11px;
    color: #77767f;
}

/* sidebar */

.sidebar {
    display: flex;
    flex-direction: column;
    flex: 0 0 34px;
    border-left: 1px solid #17161b;
    background: #45424e;
}

.side-group {
    padding: 1px 0 2px;
}

.side-group + .side-group {
    border-top: 1px solid #6d6a77;
}

.side-bottom {
    margin-top: auto;
}

.sidebar a {
    display: flex;
    flex-direction: column;
    align-items: center;
    gap: 2px;
    min-height: 28px;
    padding-top: 6px;
    color: #d8d7de;
    font-size: 4px;
    line-height: 5px;
    text-align: center;
}

.sidebar svg {
    width: 13px;
    height: 13px;
}

/* tabs and toolbars */

.tabs {
    display: flex;
    flex: 0 0 15px;
    overflow: hidden;
    background: #f2f2f9;
}

.tab {
    display: flex;
    align-items: center;
    gap: 5px;
    flex-shrink: 0;
    padding: 0 12px 0 7px;
    background: #ebebf4;
}

.tab.active {
    padding-right: 4px;
    background: #fff;
    font-weight: 600;
}

.tab svg {
    width: 6px;
    height: 6px;
}

.tab-home {
    padding: 0 7px 0 9px;
}

.tab-home svg {
    width: 7px;
    height: 7px;
}

.toolbar {
    display: flex;
    align-items: center;
    flex: 0 0 21px;
    gap: 8px;
    padding: 0 4px 0 11px;
    background: #fafaff;
}

.toolbar.line {
    border-bottom: 1px solid #ececf3;
}

.tool {
    display: flex;
    align-items: center;
    gap: 3px;
}

.tool svg {
    width: 7px;
    height: 7px;
}

.tool.off {
    color: #b9b9c3;
}

.tool.sep {
    padding-left: 7px;
    border-left: 1px solid #ececf3;
}

.search {
    height: 14px;
    padding: 0 3px;
    border: 1px solid #dddde8;
    background: #fff;
}

::placeholder {
    color: #c3c3cd;
}

.caret {
    display: inline-block;
    border: 2px solid transparent;
    border-top-color: currentColor;
    border-bottom: 0;
    vertical-align: middle;
}

/* tables */

.grid {
    width: 100%;
    table-layout: fixed;
    border-collapse: collapse;
    background: #fff;
}

.grid th {
    height: 16px;
    padding: 0 3px;
    background: #f1f1f8;
    font-weight: 400;
    text-align: left;
    color: #55545f;
    white-space: nowrap;
}

.grid td {
    height: 16px;
    padding: 0 3px;
    border-bottom: 1px solid #f0f0f5;
    white-space: nowrap;
}

.grid .mid {
    text-align: center;
}

.grid .num {
    text-align: right;
}

.grid .sorted {
    background: #ebeaf5;
}

.pager {
    display: flex;
    align-items: center;
    gap: 2px;
    flex: 0 0 17px;
    margin-top: auto;
    padding-left: 5px;
}

.pager button {
    width: 12px;
    height: 12px;
    border: 1px solid #dcdce4;
    border-radius: 50%;
    line-height: 8px;
}

.pager .off {
    background: #f0f0f5;
    color: #c9c9d1;
}

.pager .current {
    border-color: #cbe3f1;
    background: #cbe3f1;
}

/* scrollbars */

.vscroll {
    display: flex;
    flex-direction: column;
    align-items: center;
    width: 9px;
    padding: 3px 0;
    background: #ececf4;
}

.vscroll .thumb {
    width: 5px;
    border-radius: 2px;
    background: #afaebc;
}

.up,
.down {
    border: 2px solid transparent;
}

.up {
    border-bottom: 4px solid #afaebc;
    border-top: 0;
    margin-bottom: 3px;
}

.down {
    border-top: 4px solid #afaebc;
    border-bottom: 0;
    margin-top: auto;
}

.hscroll {
    display: flex;
    align-items: center;
    gap: 4px;
    height: 8px;
    margin-top: auto;
    padding-left: 3px;
    background: #ececf4;
}

.hscroll .left {
    border: 2px solid transparent;
    border-right: 4px solid #afaebc;
    border-left: 0;
}

.hscroll .thumb {
    flex: 1;
    height: 5px;
    border-radius: 2px 0 0 2px;
    background: #afaebc;
}

/* forms */

label {
    display: block;
    color: #6b6a75;
}

.field {
    display: flex;
    align-items: center;
    height: 13px;
    margin: 1px 0;
    padding: 0 2px;
    border: 1px solid #dddde8;
    background: #fff;
}

.field svg {
    width: 7px;
    height: 7px;
    color: #777682;
}

.form-row {
    display: flex;
    gap: 6px;
}

.cell {
    flex: 1;
    min-width: 0;
}

.form h2 {
    color: #77767f;
    font-size: 7px;
    font-weight: 700;
    line-height: 15px;
    white-space: nowrap;
}

.section-title {
    color: #4c93cf;
    font-weight: 400;
    font-size: 7px;
    line-height: 15px;
}

.subtabs {
    display: flex;
    gap: 6px;
    border-bottom: 1px solid #e2e2ea;
    font-family: 'Noto Sans', 'Open Sans', sans-serif;
    line-height: 17px;
}

.subtabs button {
    margin-bottom: -1px;
}

.subtabs .active {
    border-bottom: 1px solid #2c2b35;
    font-weight: 600;
}

.subtabs .hover {
    font-weight: 600;
}

.add-row {
    height: 22px;
    padding-left: 5px;
}

.note {
    display: flex;
    gap: 6px;
    margin-top: auto;
}

.note textarea {
    flex: 1;
    height: 28px;
}

/* dialogs */

.modal {
    display: flex;
    flex-direction: column;
    background: #fff;
    box-shadow: 0 2px 6px rgba(0, 0, 0, 0.4);
}

.modal-head {
    display: flex;
    align-items: center;
    gap: 5px;
    flex: 0 0 18px;
    padding: 0 5px;
    background: #fcf6a0;
    font-weight: 600;
    white-space: nowrap;
}

.modal-body {
    display: flex;
    flex-direction: column;
    flex: 1;
    min-height: 0;
    padding: 0 6px;
}

.modal-foot {
    display: flex;
    flex: 0 0 28px;
    align-items: center;
    justify-content: flex-end;
    gap: 6px;
    padding: 0 6px;
    background: #f2f2f9;
}

.primary,
.plain {
    height: 14px;
    padding: 0 7px;
    border-radius: 1px;
}

.primary {
    background: #3f7fdc;
    color: #fff;
}

.plain {
    background: #e1e0ec;
}

/* companies */

.p-companies {
    padding-top: 2px;
    font-family: Roboto, sans-serif;
}

.p-companies .topbar {
    flex-basis: 16px;
}

.p-companies .brand {
    font-size: 9px;
}

.p-companies .sidebar {
    flex-basis: 32px;
    font-family: 'Open Sans', sans-serif;
}

.p-companies .side-group {
    padding-bottom: 1px;
}

.p-companies .sidebar a {
    min-height: 26px;
    padding-top: 5px;
}

.p-companies .sidebar svg {
    width: 12px;
    height: 12px;
}

.p-companies .tabs {
    flex-basis: 14px;
}

.p-companies .tab-home {
    padding: 0 6px 0 7px;
}

.p-companies .toolbar {
    flex-basis: 19px;
    padding: 0 0 0 10px;
    gap: 8px;
}

.p-companies .search {
    width: 72px;
    height: 12px;
    margin-left: auto;
}

.companies {
    margin-left: 5px;
}

.companies th {
    height: 15px;
}

.companies td {
    height: 14px;
}

.companies .c-id {
    width: 15px;
}

.companies .c-name {
    width: 67%;
}

.companies .c-code {
    width: 33px;
}

.p-companies .statusbar a {
    margin-left: 58%;
}

/* operations */

.edge {
    border-left: 3px solid #3a3845;
}

.p-operations .brand,
.p-cash .brand {
    margin-left: -3px;
}

.p-operations .statusbar a {
    margin-left: 57%;
}

.split {
    display: flex;
    flex: 1;
    min-height: 0;
}

.pane-left {
    display: flex;
    flex-direction: column;
    flex: 0 0 37%;
    padding-bottom: 3px;
}

.pane-left .search {
    margin-left: 34px;
}

.pane-left .toolbar,
.pane-right .toolbar {
    flex-basis: 22px;
}

.pane-left .toolbar {
    padding-right: 1px;
}

.pane-right .toolbar {
    padding-left: 7px;
}

.pane-right {
    display: flex;
    flex-direction: column;
    flex: 1;
    min-width: 0;
    margin-left: 4px;
    background: #fff;
}

.op-wrap {
    display: flex;
    flex: 1;
    gap: 3px;
    min-height: 0;
    padding: 2px 0 0 10px;
}

.op-list {
    flex: 1;
    overflow: hidden;
}

.op-list h3 {
    height: 14px;
    margin: 1px 0 2px;
    padding-left: 5px;
    background: #f1f1f8;
    color: #66656f;
    font-weight: 400;
    line-height: 14px;
}

.op-list a {
    display: flex;
    align-items: center;
    gap: 5px;
    height: 16px;
    padding: 0 3px 0 4px;
    color: inherit;
    white-space: nowrap;
}

.op-list i {
    margin-left: auto;
}

.op-list .selected {
    background: #cce5f5;
}

.op-wrap .thumb {
    height: 36%;
}

.operations .c-id {
    width: 21px;
}

.operations .c-name {
    width: 157px;
}

.operations .c-auto {
    width: 97px;
}

.operations .c-on {
    width: 32px;
}

.operations input {
    width: 7px;
    height: 7px;
    border: 1px solid #d3d3dc;
    appearance: none;
    vertical-align: middle;
}

.operations input::before {
    display: block;
    width: 3px;
    height: 2px;
    margin: 1px;
    border: solid #9b9aa6;
    border-width: 0 0 1px 1px;
    content: '';
    transform: rotate(-45deg);
}

.p-operations .cursor {
    left: 105px;
    top: 119px;
}

/* tasks */

.p-tasks {
    padding-top: 5px;
}

.p-tasks .statusbar a {
    margin-left: 62%;
}

.kanban {
    display: flex;
    flex: 1;
    gap: 4px;
    min-height: 0;
    padding: 0 0 3px 9px;
    overflow: hidden;
}

.lane {
    display: flex;
    flex-direction: column;
    flex: 0 0 28%;
}

.lane h3 {
    padding-left: 3px;
    line-height: 16px;
    font-weight: 600;
    color: #55545f;
}

.lane-body {
    display: flex;
    flex-direction: column;
    gap: 3px;
    flex: 1;
    min-height: 0;
    padding: 3px 3px 0;
    overflow: hidden;
    background: #f1f1f9;
}

.card {
    display: flex;
    flex-direction: column;
    align-items: flex-start;
    flex-shrink: 0;
    padding: 4px 1px 3px 4px;
    background: #fff;
    box-shadow: 0 1px 2px rgba(0, 0, 0, 0.25);
}

.card h4 {
    margin-bottom: 1px;
}

.card a {
    line-height: 10px;
}

.badge {
    height: 7px;
    margin: 4px 0 3px;
    padding: 0 3px;
    border-radius: 1px;
    color: #fff;
    font-size: 5px;
    line-height: 7px;
}

.blue {
    background: #5b82dc;
}

.orange {
    background: #f9ae4e;
}

.green {
    background: #83c78a;
}

.red {
    background: #cb2f37;
}

.meta {
    display: flex;
    align-items: center;
    gap: 2px;
    width: 100%;
    height: 9px;
    padding-right: 3px;
    font-size: 5px;
    white-space: nowrap;
}

.meta svg {
    width: 6px;
    height: 6px;
    color: #c3c3cd;
}

.meta span {
    margin-left: auto;
}

/* cash documents */

.p-cash {
    padding-top: 1px;
}

.p-cash .tab-home {
    padding: 0 8px 0 4px;
}

.p-cash .toolbar {
    padding-left: 3px;
}

.tool.open {
    height: 14px;
    padding: 0 5px;
    background: #ececf4;
}

.p-cash .statusbar a {
    margin-left: 55%;
}

.cash th {
    height: 17px;
}

.cash td {
    height: 15px;
}

.cash .tall td {
    height: 23px;
    padding-top: 4px;
    vertical-align: top;
}

.cash .c-op {
    width: 392px;
}

.cash td:first-child {
    padding-left: 328px;
}

.cash .c-cash {
    width: 95px;
}

.create-menu {
    position: absolute;
    top: 52px;
    left: 3px;
    display: grid;
    grid-template-columns: 157px 150px;
    column-gap: 6px;
    padding: 3px 5px 3px;
    background: #fff;
    box-shadow: 0 1px 5px rgba(0, 0, 0, 0.4);
}

.menu-group {
    padding-bottom: 2px;
}

.menu-group h3 {
    height: 14px;
    border-bottom: 1px solid #f0f0f5;
    color: #9796a1;
    font-weight: 400;
    line-height: 14px;
}

.menu-group button {
    display: block;
    width: 100%;
    height: 15px;
    padding-left: 6px;
    text-align: left;
}

.menu-group .hover {
    background: #e9e8f1;
}

.p-cash .cursor {
    left: 67px;
    top: 284px;
}

/* production postings */

.p-postings {
    padding-top: 1px;
}

.p-postings .overlay {
    bottom: 12px;
}

.p-postings .modal {
    position: absolute;
    top: 6px;
    left: 114px;
    right: 0;
    bottom: 18px;
    border-radius: 2px 0 0 2px;
}

.p-postings .statusbar a {
    margin-left: 63%;
}

.form {
    display: flex;
    flex-direction: column;
    flex: 1;
    padding: 7px 0 5px 14px;
}

.form .subtabs {
    margin-top: 3px;
}

.materials th,
.materials td {
    height: 14px;
}

.assets td {
    height: 13px;
}

.materials tfoot td,
.assets tfoot td {
    background: #f1f1f8;
}

.materials .c-id {
    width: 12px;
}

.materials .c-art {
    width: 54px;
}

.p-postings .modal .subtabs {
    margin-bottom: 9px;
}

.table-box {
    flex: 1;
    margin-bottom: 6px;
    border-bottom: 1px solid #ececf3;
}

.postings th {
    height: 17px;
}

.postings td {
    height: 24px;
    padding-top: 3px;
    vertical-align: top;
}

.postings .c-id {
    width: 20px;
}

.postings .c-in {
    width: 45px;
}

.postings .c-out {
    width: 32px;
}

.postings .c-item {
    width: 199px;
}

.postings td:nth-child(2),
.postings td:nth-child(3),
.postings th:nth-child(2),
.postings th:nth-child(3) {
    text-align: right;
}

.postings small {
    font-size: 5px;
}

.chip {
    display: inline-block;
    padding: 0 3px;
    border: 1px solid;
    border-radius: 1px;
    font-size: 5px;
    line-height: 6px;
}

.yellow {
    color: #e9d65c;
}

.cyan {
    color: #73cbe0;
}

.p-postings .cursor {
    left: 247px;
    top: 39px;
}

/* new item */

.p-item {
    padding-top: 3px;
}

.p-item .statusbar {
    flex-basis: 13px;
}

.p-item .statusbar a {
    margin-left: 36%;
}

.behind-left {
    display: flex;
    flex-direction: column;
    flex: 0 0 86px;
    overflow: hidden;
}

.behind-left .modal-head,
.behind-left .toolbar {
    padding-left: 0;
}

.stock {
    flex: 1;
}

.stock .c-art {
    width: 28px;
}

.stock td {
    height: 15px;
}

.stock td:first-child,
.stock th:first-child {
    padding-left: 0;
}

.behind-left .pager {
    flex-basis: 13px;
    margin-left: -4px;
    padding-left: 0;
}

.behind-right {
    display: flex;
    flex-direction: column;
    flex: 0 0 118px;
    margin-left: auto;
    padding-bottom: 4px;
}

.behind-right .modal-head {
    justify-content: flex-end;
    padding-right: 0;
}

.modal-head svg {
    width: 6px;
    height: 6px;
}

.tree {
    flex: 1;
    padding-top: 5px;
    list-style: none;
}

.tree li {
    display: flex;
    align-items: center;
    gap: 5px;
    height: 14px;
    padding-left: 6px;
}

.tree .selected {
    background: #cce5f5;
}

.twist {
    width: 4px;
}

.filters label {
    line-height: 12px;
    border-top: 1px solid #e2e2ea;
}

.filters input {
    height: 12px;
    padding-left: 2px;
}

.filters .date {
    padding-left: 43px;
}

.p-item .modal {
    position: absolute;
    top: 1px;
    left: 86px;
    right: 118px;
    bottom: -15px;
    background: #fdfdff;
}

.p-item .modal-head {
    flex-basis: 17px;
}

.modal-head .push {
    width: 7px;
    height: 7px;
    margin-left: auto;
}

.p-item .form-row {
    min-height: 28px;
}

.p-item .first {
    min-height: 33px;
    padding-top: 5px;
}

.p-item .cell {
    position: relative;
}

.p-item .wide {
    flex: 0 0 228px;
}

.p-item .half {
    flex: 0 0 111px;
}

.strong {
    font-weight: 600;
}

.role select {
    height: 11px;
    padding-left: 2px;
    appearance: none;
    background: #5ab9e2;
    color: #fff;
}

.role .caret {
    margin: 0 3px;
}

.field.role {
    padding-left: 0;
}

.role-menu {
    position: absolute;
    top: 22px;
    left: 0;
    z-index: 1;
    display: flex;
    gap: 3px;
    width: 129px;
    height: 125px;
    padding: 0 1px 0 2px;
    background: #fff;
    box-shadow: 0 2px 5px rgba(0, 0, 0, 0.4);
}

.role-list {
    display: flex;
    flex-direction: column;
    gap: 2px;
    flex: 1;
    min-width: 0;
    font-family: Roboto, sans-serif;
}

.role-list span {
    display: flex;
    align-items: center;
    flex: 1;
    padding-left: 2px;
    overflow: hidden;
    border-radius: 1px;
    color: #fff;
    white-space: nowrap;
}

.role-list .cut-top {
    flex: 0 0 4px;
    align-items: flex-end;
}

.role-list .cut {
    flex: 0 0 6px;
    align-items: flex-start;
}

.role-menu .vscroll {
    width: 7px;
}

.role-menu .thumb {
    height: 60px;
    margin-top: 17px;
}

.r-sky {
    background: #5ab9e2;
}

.r-purple {
    background: #85058c;
}

.r-green {
    background: #88c68a;
}

.r-coral {
    background: #ee6c70;
}

.r-slate {
    background: #8f8eb3;
}

.r-tan {
    background: #d2af85;
}

.r-violet {
    background: #9364d2;
}

.r-red {
    background: #cc4444;
}

.code-label {
    display: flex;
    justify-content: space-between;
    padding-left: 13px;
}

.check {
    display: flex;
    align-items: center;
    gap: 4px;
    margin-top: 11px;
}

.check input {
    width: 8px;
    height: 8px;
    border: 1px solid #c9c9d3;
    background: #fff;
    appearance: none;
}

.p-item .subtabs {
    margin-top: 26px;
    padding-left: 130px;
}

.stack {
    width: 154px;
    padding-top: 3px;
}

.stack .field {
    margin-bottom: 3px;
}

.stack .bare {
    margin-top: 9px;
}

.p-item textarea {
    width: 100%;
    height: 28px;
}

.stack + label {
    margin-top: 22px;
}

.p-item .modal-foot {
    align-items: flex-start;
    padding-top: 7px;
}

.p-item .cursor {
    left: 191px;
    top: 110px;
}

/* commissioning act */

.p-act {
    padding-top: 1px;
}

.p-act .topbar {
    flex-basis: 19px;
}

.p-act .tab {
    padding-right: 13px;
}

.p-act .tab-home {
    padding-right: 7px;
}

.p-act .statusbar a {
    margin-left: 63%;
}

.title-row {
    display: flex;
    align-items: center;
    gap: 3px;
}

.title-row h2 {
    flex: 0 0 126px;
}

.title-row .num {
    width: 75px;
    margin-right: 12px;
}

.title-row .num input {
    text-align: right;
}

.title-row .day {
    width: 62px;
    padding-left: 10px;
}

.p-act .form-row {
    margin-right: 20px;
}

.p-act .form {
    padding-top: 6px;
}

.p-act .subtabs {
    margin-top: 2px;
}

.assets th {
    height: 20px;
    line-height: 6px;
    white-space: normal;
}

.assets td svg {
    float: right;
    width: 7px;
    height: 7px;
    color: #777682;
}

.assets .c-id {
    width: 12px;
}

.assets .c-inv {
    width: 42px;
}

.assets .c-item {
    width: 94px;
}

.assets .c-role {
    width: 82px;
}

.assets .c-cost {
    width: 62px;
}

.assets .c-qty {
    width: 34px;
}

.assets .c-pass {
    width: 42px;
}

.assets .c-year {
    width: 26px;
}

.assets .c-term {
    width: 26px;
}

.hscroll + .note {
    margin-top: 7px;
}

.total {
    width: 36px;
    line-height: 16px;
    white-space: nowrap;
}

.p-act .cursor {
    left: 400px;
    top: 158px;
}

/* ledger */

.p-ledger {
    padding-top: 6px;
    padding-bottom: 3px;
    background: #29272f;
}

.p-ledger .work {
    padding-bottom: 6px;
    background: #8f8e96;
}

.p-ledger .modal {
    flex: 1;
    min-width: 0;
    background: #fbfbff;
}

.p-ledger .modal-head {
    padding-left: 0;
}

.p-ledger .modal-body {
    padding: 0;
}

.p-ledger .modal-foot {
    padding-right: 0;
}

.p-ledger .plain {
    padding: 0 2px 0 7px;
}

.p-ledger .subtabs {
    margin-bottom: 10px;
}

.p-ledger .statusbar a {
    margin-left: 38%;
}

.ledger th {
    height: 12px;
    padding: 0 2px;
}

.ledger td {
    height: 20px;
    padding: 1px 2px;
    vertical-align: top;
    line-height: 9px;
    background: #e9e8f1;
}

.ledger td:nth-child(-n+2) {
    background: #fff;
}

.ledger th:first-child {
    padding: 0;
}

.ledger .c-id {
    width: 5px;
}

.ledger .c-plan {
    width: 19px;
}

.ledger .c-acc {
    width: 27px;
}

.ledger .c-sum {
    width: 32px;
}

.ledger .c-an {
    width: 200px;
}

.ledger .c-eye {
    width: 11px;
}

.look {
    color: #4c93cf;
}

.popover {
    position: absolute;
    top: 84px;
    left: 119px;
    display: grid;
    grid-template-columns: 82px auto;
    padding: 2px 3px 3px;
    background: #fff;
    box-shadow: 0 2px 6px rgba(0, 0, 0, 0.3);
    font-family: Roboto, sans-serif;
    line-height: 10px;
    white-space: nowrap;
}

.popover dt,
.popover dd {
    height: 10px;
    border-bottom: 1px solid #f0f0f5;
}

.popover dt {
    color: #66656f;
}

.p-ledger .cursor {
    left: 248px;
    top: 108px;
}
```
